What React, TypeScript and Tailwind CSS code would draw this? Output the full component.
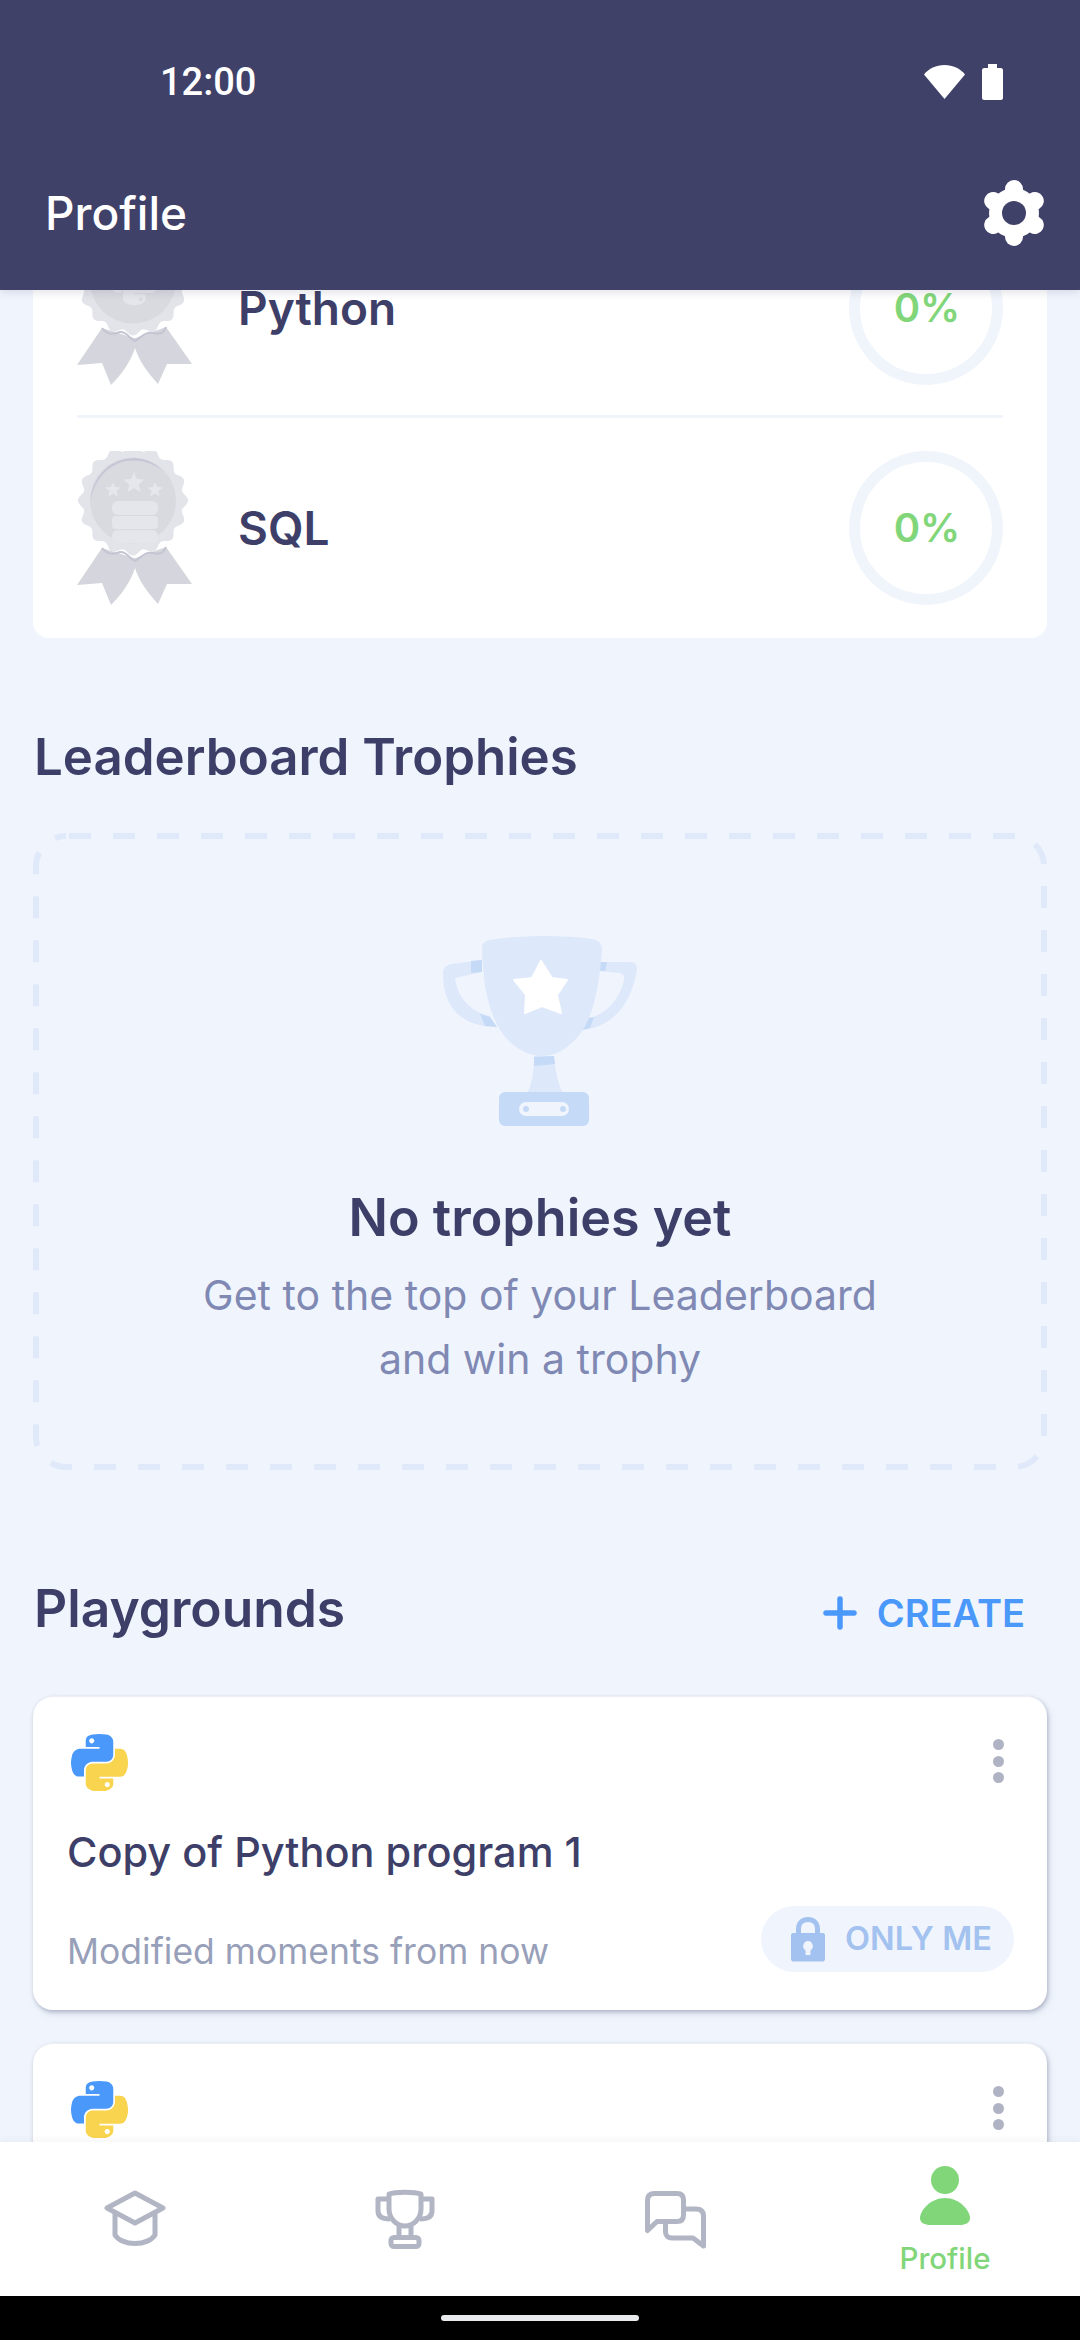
const BODY = '"Inter", "Noto Sans", sans-serif';

// wavy edge of the badge seal
const sealPath = (() => {
  const pts: string[] = [];
  for (let i = 0; i < 240; i++) {
    const a = (i / 240) * Math.PI * 2;
    const r = 52.5 + 2.6 * Math.cos(a * 16);
    pts.push(`${(56 + r * Math.sin(a)).toFixed(2)} ${(49.5 - r * Math.cos(a)).toFixed(2)}`);
  }
  return `M${pts.join("L")}Z`;
})();

const PY_BLUE =
  "M54.9 0C50.3 0 46 .4 42.1 1.1 30.8 3.1 28.7 7.3 28.7 15v10.2h26.8v3.4H18.6c-7.8 0-14.6 4.7-16.7 13.6-2.5 10.2-2.6 16.6 0 27.2 1.9 7.9 6.5 13.6 14.2 13.6h9.2V70.8c0-8.8 7.7-16.6 16.8-16.6h26.8c7.4 0 13.4-6.1 13.4-13.6V15c0-7.3-6.1-12.7-13.4-13.9C64.3.3 59.5 0 54.9 0zM40.4 8.2c2.8 0 5 2.3 5 5.1 0 2.8-2.3 5.1-5 5.1-2.8 0-5-2.3-5-5.1 0-2.8 2.3-5.1 5-5.1z";
const PY_YELLOW =
  "M85.6 28.7v11.9c0 9.2-7.8 17-16.7 17H42.1c-7.3 0-13.4 6.3-13.4 13.6v25.5c0 7.3 6.3 11.5 13.4 13.6 8.5 2.5 16.6 2.9 26.8 0 6.7-2 13.4-5.9 13.4-13.6V86.5H55.5v-3.4h40.2c7.8 0 10.7-5.4 13.4-13.6 2.8-8.4 2.7-16.5 0-27.2-1.9-7.8-5.6-13.6-13.4-13.6zM70.6 93.3c2.8 0 5 2.3 5 5.1 0 2.8-2.3 5.1-5 5.1-2.8 0-5-2.3-5-5.1 0-2.8 2.3-5.1 5-5.1z";

function PythonLogo() {
  return (
    <svg viewBox="0 0 111 111" className="w-[57px] h-[57px] ml-[4px]">
      <path d={PY_BLUE} fill="#4a98fa" fillRule="evenodd" />
      <path d={PY_YELLOW} fill="#f9d44e" fillRule="evenodd" />
    </svg>
  );
}

function Star({ x, y, r }: { x: number; y: number; r: number }) {
  const pts = [];
  for (let i = 0; i < 10; i++) {
    const a = (i / 10) * Math.PI * 2;
    const rr = i % 2 ? r * 0.45 : r;
    pts.push(`${x + rr * Math.sin(a)},${y - rr * Math.cos(a)}`);
  }
  return <polygon points={pts.join(" ")} fill="#e6e7ec" />;
}

function Medal({ kind }: { kind: "python" | "sql" }) {
  return (
    <svg viewBox="0 0 116 154" className="w-[116px] h-[154px] shrink-0">
      <path d="M25 97L0 134L25 132L34 154C45 143 54 130 58 117L60 108Z" fill="#d5d6dd" />
      <path d="M89 96L115 133L90 133L81 153C71 142 62 130 58 117L56 108Z" fill="#d5d6dd" />
      <path d={sealPath} fill="#e3e4ea" />
      <path d="M25 97C30 104 36 104 43 101C50 100 52 108 58 110C64 107 68 100 76 102C83 104 87 102 89 96" fill="none" stroke="#c4c5d2" strokeWidth="2" />
      <circle cx="56" cy="49.500" r="43" fill="#d9dae0" />
      <path d="M13.5 52C14 27 32 8 56 7C68 7 78 12 86 20C78 14 68 9.5 56 9.5C34 9.5 16 28 13.5 52Z" fill="#c5c6d6" />
      {kind === "sql" ? (
        <g>
          <Star x={36} y={39} r={8} />
          <Star x={57} y={32} r={11} />
          <Star x={78} y={39} r={8} />
          <g fill="#e5e6eb">
            <rect x="35" y="50" width="46" height="14" rx="6" />
            <rect x="35" y="65" width="46" height="13" rx="4" />
            <rect x="35" y="79" width="46" height="13" rx="6" />
          </g>
        </g>
      ) : (
        <g transform="translate(34 27) scale(0.42)">
          <path d={PY_BLUE} fill="#e5e6eb" fillRule="evenodd" />
          <path d={PY_YELLOW} fill="#e5e6eb" fillRule="evenodd" />
        </g>
      )}
    </svg>
  );
}

function Ring() {
  return (
    <div className="w-[154px] h-[154px] shrink-0 rounded-full border-[11px] border-[#f0f5fc] flex items-center justify-center">
      <span className="text-[40px] leading-none font-semibold text-[#82d67a] pl-[2px]">0%</span>
    </div>
  );
}

function CourseRow({ kind, name }: { kind: "python" | "sql"; name: string }) {
  return (
    <div className="flex items-center">
      <Medal kind={kind} />
      <span className="ml-[45px] flex-1 text-[46px] leading-none font-semibold text-[#3e3f68]">{name}</span>
      <Ring />
    </div>
  );
}

function LeaderTrophy() {
  return (
    <svg viewBox="0 0 280 240" className="w-[280px] h-[240px]">
      <path d="M134 156H154C155 170 158 182 162 192H128C132 182 134 170 134 156Z" fill="#dde8fa" />
      <path d="M134 157L154 156L155 164C148 165 141 165 134 166Z" fill="#c5daf6" />
      <rect x="99" y="192" width="90" height="34" rx="6" fill="#c5daf6" />
      <rect x="119" y="202" width="50" height="14" rx="7" fill="#f0f5fd" />
      <circle cx="126" cy="209" r="3" fill="#c5daf6" />
      <circle cx="163" cy="209" r="3" fill="#c5daf6" />
      <path d="M82 60L52 64C46 65 43 68 43 74C43 100 55 122 85 126L96 127L90 116C72 112 58 100 55 78L82 72Z" fill="#dde8fa" />
      <path d="M200 62L230 62C235 62 237 65 237 68C233 100 215 127 182 130L193 117C208 112 220 98 224 80C225 75 222 73 218 73L200 71Z" fill="#dde8fa" />
      <path d="M71 61L82 60V72L71 73ZM80 114L90 117L97 127L85 126ZM200 62H207L205 71H200ZM182 130L188 118L194 117L190 128Z" fill="#c5daf6" />
      <path d="M82 48C82 42 86 41 90 40C120 35 165 35 192 39C198 40 202 43 202 50C199 95 190 125 175 140C165 150 155 156 142 156C125 156 110 145 100 130C88 110 83 85 82 48Z" fill="#dde8fa" />
      <polygon
        points="141,61 152,78 167,80 157,95 161,113 142,106 125,113 126,95 114,80 132,78"
        fill="#ffffff"
        stroke="#ffffff"
        strokeWidth="2"
        strokeLinejoin="round"
      />
    </svg>
  );
}

function Dots() {
  return (
    <div className="flex flex-col gap-[5.5px] pt-[5px] pr-[10px]">
      <span className="block w-[11px] h-[11px] rounded-full bg-[#b0b3c3]" />
      <span className="block w-[11px] h-[11px] rounded-full bg-[#b0b3c3]" />
      <span className="block w-[11px] h-[11px] rounded-full bg-[#b0b3c3]" />
    </div>
  );
}

function OnlyMePill() {
  return (
    <div className="flex items-center h-[66px] w-[253px] rounded-full bg-[#f0f5fd] pl-[30px]">
      <svg viewBox="0 0 34 45" className="w-[34px] h-[45px]">
        <path d="M7.5 18V12C7.5 6 11.5 2.5 17 2.5C22.5 2.5 26.5 6 26.5 12V18" fill="none" stroke="#a4c2ef" strokeWidth="5" />
        <path
          fillRule="evenodd"
          d="M2 16H32C33 16 34 17 34 18V42C34 43.5 33 44.5 32 44.5H2C1 44.5 0 43.5 0 42V18C0 17 1 16 2 16ZM17 24A5 5 0 0 0 14.5 33.2V38H19.5V33.2A5 5 0 0 0 17 24Z"
          fill="#a4c2ef"
        />
      </svg>
      <span className="ml-[20px] text-[32.5px] leading-none font-semibold text-[#a4c2ef]">ONLY ME</span>
    </div>
  );
}

function PlaygroundCard() {
  return (
    <div className="h-[314px] rounded-[20px] bg-white border-t border-[#ebeef3] shadow-[1px_2px_4px_rgba(70,75,110,0.35),3px_5px_8px_rgba(70,75,110,0.08)] pl-[34px] pr-[33px]">
      <div className="flex justify-between pt-[37px]">
        <PythonLogo />
        <Dots />
      </div>
      <div className="mt-[36px] text-[41.5px] leading-[50px] font-medium text-[#3e3f68]">Copy of Python program 1</div>
      <div className="mt-[29px] flex items-start justify-between">
        <span className="mt-[21px] text-[35.5px] leading-[50px] text-[#989fb9]">Modified moments from now</span>
        <OnlyMePill />
      </div>
    </div>
  );
}

function Gear() {
  return (
    <svg viewBox="-33 -33 66 66" className="w-[66px] h-[66px]">
      <g fill="#ffffff">
        <rect x="-9" y="-33" width="18" height="66" rx="9" />
        <rect x="-9" y="-33" width="18" height="66" rx="9" transform="rotate(60)" />
        <rect x="-9" y="-33" width="18" height="66" rx="9" transform="rotate(120)" />
        <circle r="25" />
      </g>
      <circle r="12" fill="#404168" />
    </svg>
  );
}

function NavCap() {
  return (
    <svg viewBox="0 0 62 56" className="w-[62px] h-[56px]" fill="none" stroke="#b2b5c4" strokeWidth="5" strokeLinejoin="round" strokeLinecap="round">
      <path d="M31 3L59 18L31 33L3 18Z" />
      <path d="M11 24V45C14 50 22 53.5 31 53.5C40 53.5 48 50 51 45V24" />
    </svg>
  );
}

function NavTrophy() {
  return (
    <svg viewBox="0 0 60 60" className="w-[60px] h-[60px]" fill="none" stroke="#b2b5c4" strokeWidth="5" strokeLinejoin="round">
      <path d="M14 5C20 2.5 40 2.5 46 5V20C46 30 38 37 30 37C22 37 14 30 14 20Z" />
      <path d="M14 10H3V22C3 27 7 30 15 30" />
      <path d="M46 10H57V22C57 27 53 30 45 30" />
      <path d="M24 37V48M36 37V48" />
      <rect x="16" y="48.5" width="28" height="9" rx="3" />
    </svg>
  );
}

function NavChat() {
  return (
    <svg viewBox="0 0 61 58" className="w-[61px] h-[58px]" fill="none" stroke="#b2b5c4" strokeWidth="5" strokeLinejoin="round" strokeLinecap="round">
      <path d="M10 2.5H32C36.5 2.5 38.5 5 38.5 9V24C38.5 28 36.5 30.5 32 30.5H12L2.5 39.5V9C2.5 5 5 2.5 10 2.5Z" />
      <path d="M39 18H51C56 18 58.5 20.500 58.5 25V55L48 47H27C23 47 20.500 44.500 20.500 41V31" />
    </svg>
  );
}

function NavPerson() {
  return (
    <svg viewBox="0 0 50 59" className="w-[50px] h-[59px]" fill="#82d67a">
      <circle cx="25" cy="14" r="14" />
      <path d="M25 32C40 32 50 45 50 52C50 57 45 59 40 59H10C5 59 0 57 0 52C0 45 10 32 25 32Z" />
    </svg>
  );
}

export default function App() {
  return (
    <div className="w-[1080px] h-[2340px] flex flex-col overflow-hidden bg-[#f0f5fd]" style={{ fontFamily: BODY }}>
      <header className="relative z-10 h-[290px] shrink-0 bg-[#404168] shadow-[0_3px_8px_rgba(40,40,70,0.12)] text-white">
        <div className="flex items-center justify-between h-[164px] pl-[160px] pr-[77px]">
          <span className="text-[38px] leading-none font-medium" style={{ fontFamily: '"Roboto", sans-serif' }}>12:00</span>
          <div className="flex items-center gap-[17px]">
            <svg viewBox="0 0 41 34" className="w-[41px] h-[34px]">
              <path d="M0 9.500C5 3.500 12 0 20.500 0C29 0 36 3.500 41 9.500L20.500 34Z" fill="#ffffff" />
            </svg>
            <svg viewBox="0 0 21 36" className="w-[21px] h-[36px]">
              <path d="M6 0H15V4H19C20 4 21 5 21 6V34C21 35 20 36 19 36H2C1 36 0 35 0 34V6C0 5 1 4 2 4H6Z" fill="#ffffff" />
            </svg>
          </div>
        </div>
        <div className="flex items-center justify-between pl-[45px] pr-[33px] mt-[16px]">
          <span className="text-[46px] leading-[66px] font-medium">Profile</span>
          <Gear />
        </div>
      </header>

      <main className="flex-1 min-h-0 overflow-hidden px-[33px]">
        <div className="-mt-[91px]">
          <section className="rounded-[16px] bg-white px-[44px] pb-[33px]">
            <div className="pt-[32px] pb-[30px] border-b-[3px] border-[#f0f5fc]">
              <CourseRow kind="python" name="Python" />
            </div>
            <div className="pt-[33px]">
              <CourseRow kind="sql" name="SQL" />
            </div>
          </section>

          <h2 className="mt-[89px] pl-[1px] text-[51px] leading-[60px] font-semibold text-[#3e3f68]">Leaderboard Trophies</h2>

          <section className="relative mt-[46px] h-[637px] flex flex-col items-center pt-[67px]">
            <svg className="absolute inset-0 w-full h-full" fill="none">
              <rect x="3" y="3" width="1008" height="631" rx="30" stroke="#dfe9f9" strokeWidth="6" strokeDasharray="22 22" strokeDashoffset="41" />
            </svg>
            <LeaderTrophy />
            <h3 className="mt-[48px] text-[52px] leading-[60px] font-semibold text-[#3e3f68]">No trophies yet</h3>
            <p className="mt-[15px] text-center text-[41px] leading-[64px] text-[#8089b3]">
              Get to the top of your Leaderboard
              <br />
              and win a trophy
            </p>
          </section>

          <div className="mt-[108px] flex items-center justify-between pl-[1px] pr-[22px]">
            <h2 className="text-[51.5px] leading-[60px] font-semibold text-[#3e3f68]">Playgrounds</h2>
            <div className="flex items-center gap-[20px] pt-[9px]">
              <svg viewBox="0 0 34 34" className="w-[34px] h-[34px]" stroke="#4a98f9" strokeWidth="5.500" strokeLinecap="round">
                <path d="M17 3V31M3 17H31" />
              </svg>
              <span className="text-[38px] leading-none font-semibold text-[#4a98f9]">CREATE</span>
            </div>
          </div>

          <div className="mt-[58px] flex flex-col gap-[33px]">
            <PlaygroundCard />
            <PlaygroundCard />
          </div>
        </div>
      </main>

      <nav className="relative z-10 h-[154px] shrink-0 grid grid-cols-4 bg-white shadow-[0_-3px_6px_rgba(40,40,70,0.04)]">
        <div className="flex justify-center pt-[48px]"><NavCap /></div>
        <div className="flex justify-center pt-[47px]"><NavTrophy /></div>
        <div className="flex justify-center pt-[49px]"><NavChat /></div>
        <div className="flex flex-col items-center pt-[24px]">
          <NavPerson />
          <span className="mt-[16px] text-[29.5px] leading-[34px] font-medium text-[#82d67a]">Profile</span>
        </div>
      </nav>

      <div className="h-[44px] shrink-0 bg-black flex items-center justify-center">
        <div className="w-[198px] h-[6px] rounded-full bg-[#e8eaed]" />
      </div>
    </div>
  );
}
